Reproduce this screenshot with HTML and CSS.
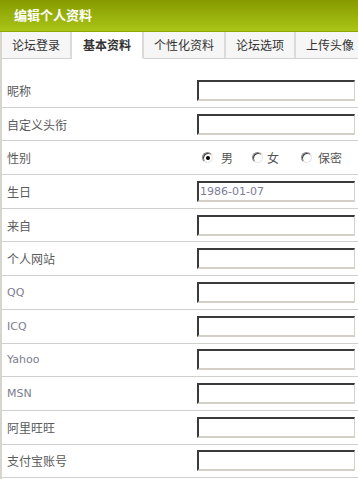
FILE: index.html
```html
<!DOCTYPE html>
<html lang="zh-CN">
<head>
<meta charset="utf-8">
<title>编辑个人资料</title>
<link rel="stylesheet" href="styles.css">
</head>
<body>
<div class="panel">
  <div class="header">编辑个人资料</div>
  <div class="body">
    <div class="tabs">
      <div class="tab">论坛登录</div>
      <div class="tab active">基本资料</div>
      <div class="tab">个性化资料</div>
      <div class="tab">论坛选项</div>
      <div class="tab">上传头像</div>
    </div>
    <div class="form">
      <div class="row"><div class="label">昵称</div><div class="field"><span class="input"></span></div></div>
      <div class="row"><div class="label">自定义头衔</div><div class="field"><span class="input"></span></div></div>
      <div class="row"><div class="label">性别</div>
        <div class="field radios">
          <span class="radio checked"></span><span class="rlabel">男</span>
          <span class="radio r2"></span><span class="rlabel l2">女</span>
          <span class="radio r3"></span><span class="rlabel l3">保密</span>
        </div>
      </div>
      <div class="row"><div class="label">生日</div><div class="field"><span class="input date">1986-01-07</span></div></div>
      <div class="row"><div class="label">来自</div><div class="field"><span class="input"></span></div></div>
      <div class="row"><div class="label">个人网站</div><div class="field"><span class="input"></span></div></div>
      <div class="row"><div class="label en">QQ</div><div class="field"><span class="input"></span></div></div>
      <div class="row"><div class="label en">ICQ</div><div class="field"><span class="input"></span></div></div>
      <div class="row"><div class="label en">Yahoo</div><div class="field"><span class="input"></span></div></div>
      <div class="row"><div class="label en">MSN</div><div class="field"><span class="input"></span></div></div>
      <div class="row"><div class="label">阿里旺旺</div><div class="field"><span class="input"></span></div></div>
      <div class="row"><div class="label">支付宝账号</div><div class="field"><span class="input"></span></div></div>
    </div>
  </div>
</div>
</body>
</html>
```
FILE: styles.css
```css
html, body {
  margin: 0;
  padding: 0;
  background: #ffffff;
  overflow: hidden;
}
body {
  font-family: "Noto Sans CJK SC", "Liberation Sans", sans-serif;
  font-size: 12px;
  color: #555;
}
.panel {
  width: 358px;
  height: 479px;
  overflow: hidden;
}
.header {
  height: 31px;
  line-height: 30px;
  padding-left: 14px;
  font-size: 13px;
  font-weight: bold;
  color: #ffffff;
  background: linear-gradient(to bottom, #869a00 0%, #98b00a 50%, #aac417 100%);
  border-bottom: 1px solid #8fa600;
}
.body {
  border-left: 2px solid #d6d6ce;
  height: 447px;
}
.tabs {
  display: flex;
  height: 27px;
  white-space: nowrap;
}
.tab {
  flex: none;
  height: 26px;
  line-height: 26px;
  padding: 0 10px;
  background: #f6f6f6;
  color: #333;
  font-size: 12px;
  border-right: 2px solid #dadada;
  border-bottom: 1px solid #d0d0d0;
}
.tab.active {
  background: #ffffff;
  font-weight: bold;
  padding: 0 11px;
  border-bottom-color: #ffffff;
}
.form {
  padding-top: 15px;
}
.row {
  display: grid;
  grid-template-columns: 195px 158px;
  align-items: center;
  height: 32.7px;
  border-bottom: 1px solid #d0d0cc;
}
.label {
  padding-left: 5px;
  color: #5a5a5a;
}
.label.en {
  font-family: "DejaVu Sans", sans-serif;
  font-size: 11px;
  color: #7d7d90;
}
.field {
  display: flex;
  align-items: center;
}
.input {
  box-sizing: border-box;
  display: block;
  width: 158px;
  height: 21px;
  border-style: solid;
  border-width: 2px 1px 2px 2px;
  border-color: #3a3a3a #d4d0c8 #d4d0c8 #3a3a3a;
  background: #fff;
}
.input.date {
  font-family: "DejaVu Sans", sans-serif;
  font-size: 11px;
  line-height: 17px;
  padding-left: 1px;
  color: #7c7c98;
}
.radios {
  padding-left: 5px;
}
.radio {
  box-sizing: border-box;
  position: relative;
  width: 11px;
  height: 11px;
  border-radius: 50%;
  border: 1px solid;
  border-color: #8a8a8a #e6e6e6 #e6e6e6 #8a8a8a;
  box-shadow: inset 1px 1px 0 #404040;
  background: #fff;
  flex: none;
}
.radio.checked::after {
  content: "";
  position: absolute;
  left: 3px;
  top: 3px;
  width: 4px;
  height: 4px;
  border-radius: 50%;
  background: #000;
}
.rlabel {
  margin-left: 8px;
  color: #555;
}
.radio.r2 {
  margin-left: 19px;
}
.rlabel.l2 {
  margin-left: 4px;
}
.radio.r3 {
  margin-left: 22px;
}
.rlabel.l3 {
  margin-left: 6px;
}
```
